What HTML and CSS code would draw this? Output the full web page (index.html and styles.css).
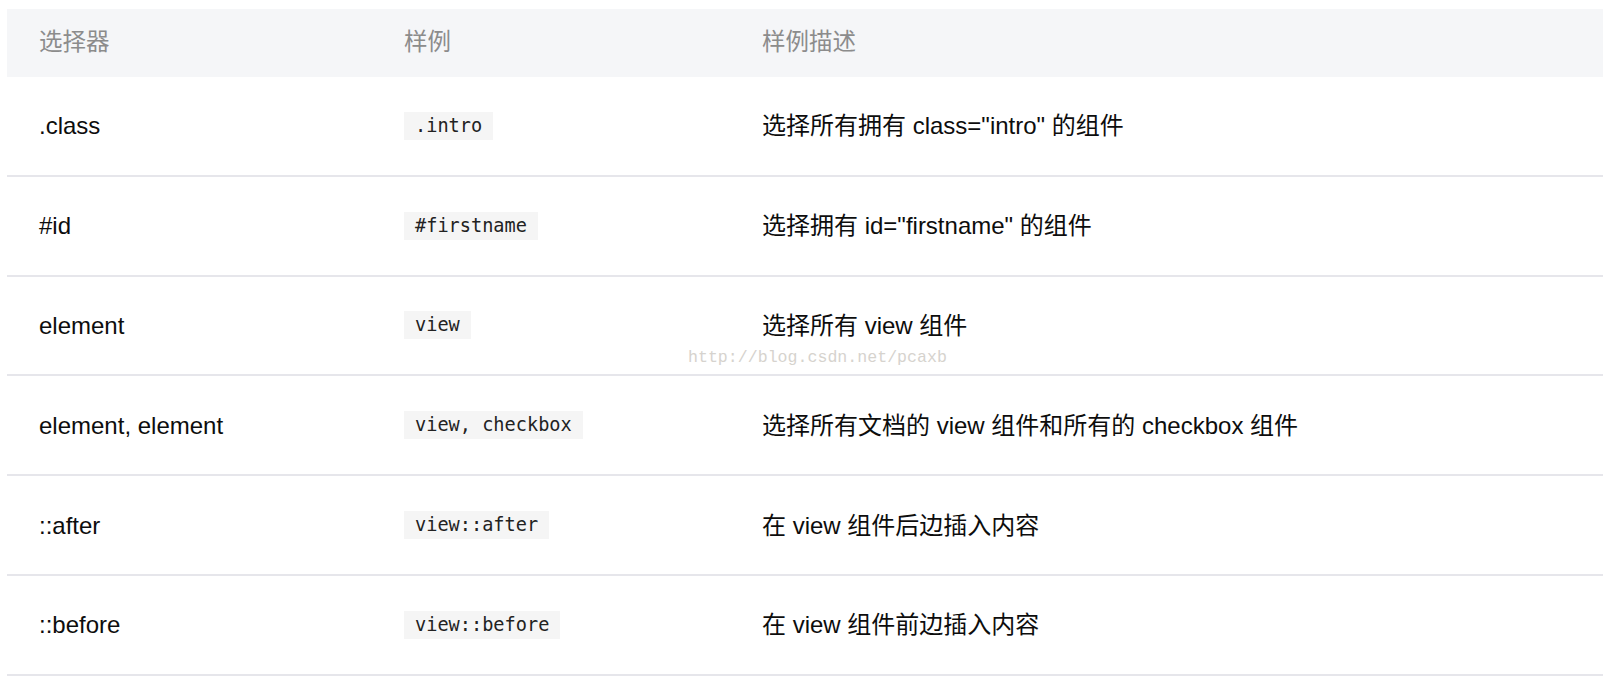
FILE: index.html
```html
<!DOCTYPE html>
<html lang="zh">
<head>
<meta charset="utf-8">
<title>选择器</title>
<link rel="stylesheet" href="styles.css">
</head>
<body>
<div class="table">
  <div class="row head">
    <div class="cell">选择器</div>
    <div class="cell">样例</div>
    <div class="cell">样例描述</div>
  </div>
  <div class="row">
    <div class="cell">.class</div>
    <div class="cell code-cell"><code class="code">.intro</code></div>
    <div class="cell">选择所有拥有 class="intro" 的组件</div>
  </div>
  <div class="row">
    <div class="cell">#id</div>
    <div class="cell code-cell"><code class="code">#firstname</code></div>
    <div class="cell">选择拥有 id="firstname" 的组件</div>
  </div>
  <div class="row">
    <div class="cell">element</div>
    <div class="cell code-cell"><code class="code">view</code></div>
    <div class="cell">选择所有 view 组件</div>
  </div>
  <div class="row">
    <div class="cell">element, element</div>
    <div class="cell code-cell"><code class="code">view, checkbox</code></div>
    <div class="cell">选择所有文档的 view 组件和所有的 checkbox 组件</div>
  </div>
  <div class="row">
    <div class="cell">::after</div>
    <div class="cell code-cell"><code class="code">view::after</code></div>
    <div class="cell">在 view 组件后边插入内容</div>
  </div>
  <div class="row">
    <div class="cell">::before</div>
    <div class="cell code-cell"><code class="code">view::before</code></div>
    <div class="cell">在 view 组件前边插入内容</div>
  </div>
  <div class="watermark">http://blog.csdn.net/pcaxb</div>
</div>
</body>
</html>
```

FILE: styles.css
```css
html, body {
  margin: 0;
  padding: 0;
  background: #ffffff;
}

body {
  padding: 9px 0 0 7px;
  font-family: "Liberation Sans", "Noto Sans CJK SC", sans-serif;
  color: #0d0d0d;
}

.table {
  position: relative;
  width: 1596px;
}

.row {
  display: grid;
  grid-template-columns: 366px 358px 1fr;
  align-items: center;
  height: 99.8px;
  box-sizing: border-box;
  border-bottom: 2px solid #e6e6eb;
  font-size: 24px;
  line-height: 30px;
}

.row.head {
  height: 68px;
  border-bottom: none;
  background: #f5f6f8;
  color: #8c8c8c;
  font-size: 23.5px;
}

.cell {
  display: flex;
  align-items: center;
  padding-left: 31px;
  padding-top: 1px;
  white-space: nowrap;
}

.row.head .cell {
  padding-top: 0;
  padding-bottom: 2px;
}

.cell:first-child {
  padding-left: 32px;
}

.cell.code-cell {
  padding-top: 0;
}

.code {
  display: block;
  height: 28px;
  line-height: 28px;
  padding: 0 11px;
  background: #f5f5f5;
  color: #222222;
  font-family: "DejaVu Sans Mono", monospace;
  font-size: 18.6px;
  white-space: pre;
}

.watermark {
  position: absolute;
  left: 681px;
  top: 339px;
  font-family: "Liberation Mono", monospace;
  font-size: 16.6px;
  line-height: 20px;
  color: #d6d3ce;
  white-space: nowrap;
}
```
